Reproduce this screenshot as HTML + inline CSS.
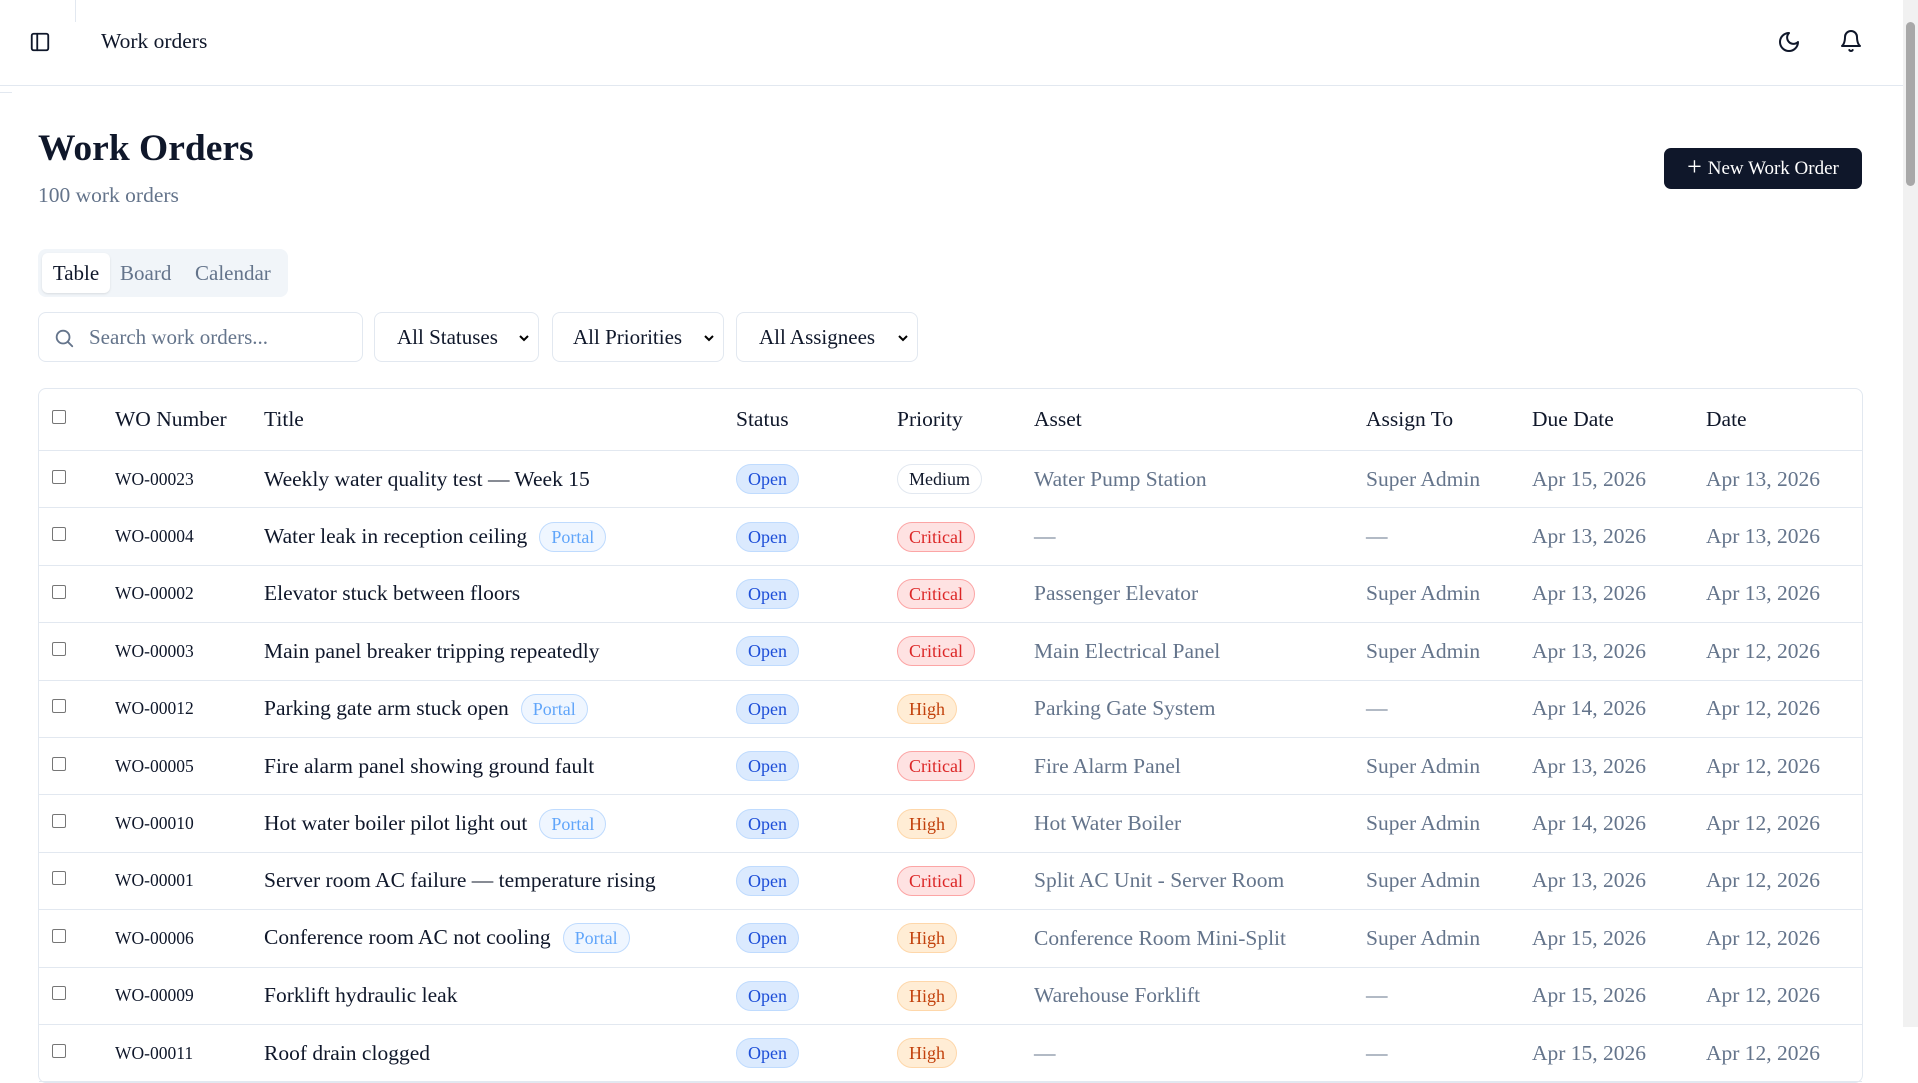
<!DOCTYPE html>
<html><head><meta charset="utf-8"><style>
*{box-sizing:border-box;margin:0;padding:0}
html,body{width:1918px;height:1027px;overflow:hidden;background:#fff;font-family:"Liberation Serif",serif;color:#0f172a}
.hdr{position:absolute;left:0;top:0;width:1903px;height:86px;border-bottom:1px solid #e2e8f0}
.abs{position:absolute}
.sb{position:absolute;right:0;top:0;width:15px;height:1027px;background:#f1f1f1}
.sb .th{position:absolute;left:3px;top:22px;width:9px;height:164px;background:#a8a8a8;border-radius:5px}
h1{position:absolute;left:38px;top:130px;font-size:37.5px;font-weight:bold;line-height:1}
.sub{position:absolute;left:38px;top:183px;font-size:21.5px;color:#64748b}
.btn{position:absolute;left:1664px;top:148px;width:198px;height:41px;background:#0f172a;color:#fff;border-radius:7px;font-size:19px;display:flex;align-items:center;justify-content:center;gap:6px}
.tabs{position:absolute;left:38px;top:249px;width:250px;height:48px;background:#f1f5f9;border-radius:8px;font-size:21px;color:#64748b}
.tabs span{position:absolute;top:12px}
.tabs .act{left:4px;top:4px;width:68px;height:40px;background:#fff;border-radius:6px;color:#0f172a;box-shadow:0 1px 2px rgba(0,0,0,.1);text-align:center;line-height:40px}
.f{position:absolute;top:312px;height:50px;border:1px solid #e2e8f0;border-radius:8px;font-size:21px;display:flex;align-items:center}
.f svg{position:absolute}
table{position:absolute;left:38px;top:388px;width:1825px;border:1px solid #e2e8f0;border-radius:8px;border-collapse:separate;border-spacing:0;table-layout:fixed;font-size:21.5px}
td,th{text-align:left;font-weight:normal;white-space:nowrap;padding:0;border-bottom:1px solid #e2e8f0;vertical-align:middle}
th{height:62px}
td{height:57.4px}
td:nth-child(1),th:nth-child(1){padding-left:13px}
.cb{display:inline-block;width:14px;height:14px;border:1px solid #767676;border-radius:2px;vertical-align:middle;position:relative;top:-4px}
.wo{font-size:17.5px}
.g{color:#64748b}
.b{display:inline-block;border-radius:15px;padding:0 11px;height:30px;line-height:28px;font-size:18px;border:1px solid}
.o{background:#dbeafe;border-color:#bfdbfe;color:#1d4ed8}
.c{background:#fee2e2;border-color:#fca5a5;color:#dc2626}
.h{background:#ffedd5;border-color:#fed7aa;color:#c2410c}
.m{background:#fff;border-color:#e2e8f0;color:#0f172a}
.p{background:#eff6ff;border-color:#bfdbfe;color:#60a5fa;margin-left:12px}
</style></head><body>
<div class="hdr">
<div class="abs" style="left:75px;top:0;width:1px;height:22px;background:#e2e8f0"></div>
<svg class="abs" style="left:29px;top:31px" width="22" height="22" viewBox="0 0 24 24" fill="none" stroke="#0f172a" stroke-width="2" stroke-linecap="round" stroke-linejoin="round"><rect x="3" y="3" width="18" height="18" rx="2"/><path d="M9 3v18"/></svg>
<div class="abs" style="left:101px;top:29px;font-size:21.5px">Work orders</div>
<svg class="abs" style="left:1777px;top:30px" width="24" height="24" viewBox="0 0 24 24" fill="none" stroke="#0f172a" stroke-width="2" stroke-linecap="round" stroke-linejoin="round"><path d="M12 3a6 6 0 0 0 9 9 9 9 0 1 1-9-9Z"/></svg>
<svg class="abs" style="left:1839px;top:29px" width="24" height="24" viewBox="0 0 24 24" fill="none" stroke="#0f172a" stroke-width="2" stroke-linecap="round" stroke-linejoin="round"><path d="M6 8a6 6 0 0 1 12 0c0 7 3 9 3 9H3s3-2 3-9"/><path d="M10.3 21a1.94 1.94 0 0 0 3.4 0"/></svg>
</div>
<div class="abs" style="left:0;top:92px;width:12px;height:1px;background:#e2e8f0"></div>
<div class="sb"><div class="th"></div></div>
<h1>Work Orders</h1>
<div class="sub">100 work orders</div>
<div class="btn"><span style="font-size:26px;line-height:1;margin-top:-3px">+</span> New Work Order</div>
<div class="tabs"><span class="act">Table</span><span style="left:82px">Board</span><span style="left:157px">Calendar</span></div>
<div class="f" style="left:38px;width:325px;color:#64748b"><svg style="left:14px;top:14px" width="22" height="22" viewBox="0 0 24 24" fill="none" stroke="#64748b" stroke-width="2" stroke-linecap="round"><circle cx="11" cy="11" r="7"/><path d="m21 21-4.3-4.3"/></svg><span style="margin-left:50px;font-size:21px">Search work orders...</span></div>
<div class="f" style="left:374px;width:165px"><span style="margin-left:22px">All Statuses</span><svg style="right:8px;top:19px" width="12" height="12" viewBox="0 0 12 12" fill="none" stroke="#000" stroke-width="2"><path d="M2 4l4 4 4-4"/></svg></div>
<div class="f" style="left:552px;width:172px"><span style="margin-left:20px">All Priorities</span><svg style="right:8px;top:19px" width="12" height="12" viewBox="0 0 12 12" fill="none" stroke="#000" stroke-width="2"><path d="M2 4l4 4 4-4"/></svg></div>
<div class="f" style="left:736px;width:182px"><span style="margin-left:22px">All Assignees</span><svg style="right:8px;top:19px" width="12" height="12" viewBox="0 0 12 12" fill="none" stroke="#000" stroke-width="2"><path d="M2 4l4 4 4-4"/></svg></div>
<table>
<colgroup><col style="width:76px"><col style="width:149px"><col style="width:472px"><col style="width:161px"><col style="width:137px"><col style="width:332px"><col style="width:166px"><col style="width:174px"><col></colgroup>
<tr><th><span class="cb"></span></th><th>WO Number</th><th>Title</th><th>Status</th><th>Priority</th><th>Asset</th><th>Assign To</th><th>Due Date</th><th>Date</th></tr>
<tr><td><span class="cb"></span></td><td class="wo">WO-00023</td><td>Weekly water quality test — Week 15</td><td><span class="b o">Open</span></td><td><span class="b m">Medium</span></td><td class="g">Water Pump Station</td><td class="g">Super Admin</td><td class="g">Apr 15, 2026</td><td class="g">Apr 13, 2026</td></tr>
<tr><td><span class="cb"></span></td><td class="wo">WO-00004</td><td>Water leak in reception ceiling<span class="b p">Portal</span></td><td><span class="b o">Open</span></td><td><span class="b c">Critical</span></td><td class="g">—</td><td class="g">—</td><td class="g">Apr 13, 2026</td><td class="g">Apr 13, 2026</td></tr>
<tr><td><span class="cb"></span></td><td class="wo">WO-00002</td><td>Elevator stuck between floors</td><td><span class="b o">Open</span></td><td><span class="b c">Critical</span></td><td class="g">Passenger Elevator</td><td class="g">Super Admin</td><td class="g">Apr 13, 2026</td><td class="g">Apr 13, 2026</td></tr>
<tr><td><span class="cb"></span></td><td class="wo">WO-00003</td><td>Main panel breaker tripping repeatedly</td><td><span class="b o">Open</span></td><td><span class="b c">Critical</span></td><td class="g">Main Electrical Panel</td><td class="g">Super Admin</td><td class="g">Apr 13, 2026</td><td class="g">Apr 12, 2026</td></tr>
<tr><td><span class="cb"></span></td><td class="wo">WO-00012</td><td>Parking gate arm stuck open<span class="b p">Portal</span></td><td><span class="b o">Open</span></td><td><span class="b h">High</span></td><td class="g">Parking Gate System</td><td class="g">—</td><td class="g">Apr 14, 2026</td><td class="g">Apr 12, 2026</td></tr>
<tr><td><span class="cb"></span></td><td class="wo">WO-00005</td><td>Fire alarm panel showing ground fault</td><td><span class="b o">Open</span></td><td><span class="b c">Critical</span></td><td class="g">Fire Alarm Panel</td><td class="g">Super Admin</td><td class="g">Apr 13, 2026</td><td class="g">Apr 12, 2026</td></tr>
<tr><td><span class="cb"></span></td><td class="wo">WO-00010</td><td>Hot water boiler pilot light out<span class="b p">Portal</span></td><td><span class="b o">Open</span></td><td><span class="b h">High</span></td><td class="g">Hot Water Boiler</td><td class="g">Super Admin</td><td class="g">Apr 14, 2026</td><td class="g">Apr 12, 2026</td></tr>
<tr><td><span class="cb"></span></td><td class="wo">WO-00001</td><td>Server room AC failure — temperature rising</td><td><span class="b o">Open</span></td><td><span class="b c">Critical</span></td><td class="g">Split AC Unit - Server Room</td><td class="g">Super Admin</td><td class="g">Apr 13, 2026</td><td class="g">Apr 12, 2026</td></tr>
<tr><td><span class="cb"></span></td><td class="wo">WO-00006</td><td>Conference room AC not cooling<span class="b p">Portal</span></td><td><span class="b o">Open</span></td><td><span class="b h">High</span></td><td class="g">Conference Room Mini-Split</td><td class="g">Super Admin</td><td class="g">Apr 15, 2026</td><td class="g">Apr 12, 2026</td></tr>
<tr><td><span class="cb"></span></td><td class="wo">WO-00009</td><td>Forklift hydraulic leak</td><td><span class="b o">Open</span></td><td><span class="b h">High</span></td><td class="g">Warehouse Forklift</td><td class="g">—</td><td class="g">Apr 15, 2026</td><td class="g">Apr 12, 2026</td></tr>
<tr><td><span class="cb"></span></td><td class="wo">WO-00011</td><td>Roof drain clogged</td><td><span class="b o">Open</span></td><td><span class="b h">High</span></td><td class="g">—</td><td class="g">—</td><td class="g">Apr 15, 2026</td><td class="g">Apr 12, 2026</td></tr>
</table>
</body></html>
